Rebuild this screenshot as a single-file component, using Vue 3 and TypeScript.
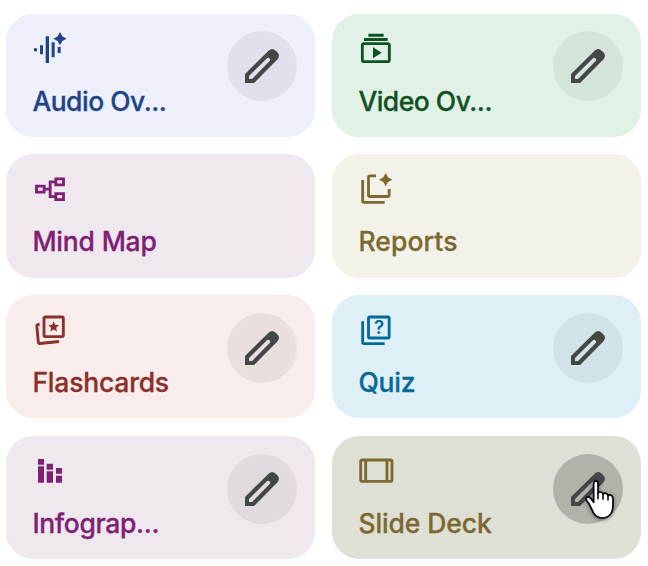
<template>
  <div class="studio-grid">
    <div
      v-for="tile in tiles"
      :key="tile.id"
      :class="['tile', tile.color, { hovered: tile.hovered }]"
    >
      <div class="tile-main">
        <svg class="tile-icon" viewBox="0 0 108 108" aria-hidden="true">
          <g v-if="tile.id === 'audio'" fill="currentColor">
            <path d="M6 55h9v9H6zM24 46h9v27h-9zM41 19h10v80H41zM59 37h9v45h-9zM77 51h9v18h-9z" />
            <path d="M84 6l7 13 13 7-13 7-7 13-7-13-13-7 13-7z" />
          </g>
          <g v-else-if="tile.id === 'video'">
            <rect class="line" x="13" y="41" width="81" height="54" rx="5" />
            <path fill="currentColor" d="M18 24h71v9H18zM31 11h46v9H31zM45 52l26 16-26 17z" />
          </g>
          <g v-else-if="tile.id === 'mindmap'" class="line">
            <path d="M13.5 45.5h23v18h-23zM71.5 23.5h23v18h-23zM71.5 68h23v18h-23z" />
            <path d="M37 54.5h17M71 32.5H54.5V77H71" />
          </g>
          <g v-else-if="tile.id === 'reports'">
            <path class="line" d="M14 27V90q0 4 4 4H80M54 14.5H36q-4.5 0-4.5 4.5V72q0 4.5 4.5 4.5H89q4.5 0 4.5-4.5V54" />
            <path fill="currentColor" d="M83 6l7 13 13 7-13 7-7 13-7-13-13-7 13-7z" />
          </g>
          <g v-else-if="tile.id === 'flashcards'">
            <rect class="line" x="36" y="15" width="58" height="59" rx="4" />
            <path class="line" d="M23 37l-5 .5q-4 1-3.5 5L19 90q.5 5 5 4.5L81 88.5" />
            <path fill="currentColor" d="M65 28l4.5 10.5 11.5 1-8.5 7.5 2.5 11.5-10-6-10 6L57.5 47 49 39.5l11.5-1z" />
          </g>
          <g v-else-if="tile.id === 'quiz'">
            <path class="line" d="M14 28V91q0 4 4 4H80" />
            <rect class="line" x="31.5" y="15" width="62" height="63" rx="4" />
            <text class="question" x="63" y="67" text-anchor="middle">?</text>
          </g>
          <g v-else-if="tile.id === 'infographic'" fill="currentColor">
            <path d="M18 21h18v17H18zM18 43h18v49H18zM44 35h19v18H44zM44 58h19v34H44zM72 48h18v17H72zM72 71h18v21H72z" />
          </g>
          <g v-else class="line">
            <rect x="8" y="24" width="94" height="64" rx="5" />
            <path d="M23 24v64M87 24v64" />
          </g>
        </svg>
        <span class="tile-label" :style="{ letterSpacing: tile.spacing + 'px' }">{{ tile.label }}</span>
      </div>
      <button v-if="tile.editable" class="edit-button" aria-label="Edit">
        <svg class="pencil" viewBox="0 0 101 101">
          <path
            fill="currentColor"
            fill-rule="evenodd"
            d="M0 101V74L70 5Q81-5 92 6L96 10Q106 20 96 31L27 101ZM12 89H21L74 35Q76 31 73 28T66 27L12 80Z"
          />
        </svg>
        <svg v-if="tile.hovered" class="pointer" viewBox="0 0 90 118">
          <path
            d="M26 67V10Q26 3 32.5 3T39 10V40Q42 34 49 37Q54 39 54 43Q58 37 65 41Q69 43 69 47Q74 42 80 47Q84 50 84 57V77Q84 91 78 101Q69 114 52 114Q34 114 25 98L15 77Q12 70 6 63Q1 56 6 52Q12 48 18 56Z"
          />
          <path class="fingers" d="M39 38V56M54 43V58M69 47V60" />
        </svg>
      </button>
    </div>
  </div>
</template>

<script setup lang="ts">
interface Tile {
  id: string;
  label: string;
  color: string;
  editable: boolean;
  spacing: number;
  hovered?: boolean;
}

const tiles: Tile[] = [
  { id: 'audio', label: 'Audio Ov...', color: 'blue', editable: true, spacing: -0.5 },
  { id: 'video', label: 'Video Ov...', color: 'green', editable: true, spacing: -0.5 },
  { id: 'mindmap', label: 'Mind Map', color: 'purple', editable: false, spacing: -0.2 },
  { id: 'reports', label: 'Reports', color: 'olive', editable: false, spacing: 0.1 },
  { id: 'flashcards', label: 'Flashcards', color: 'red', editable: true, spacing: -0.2 },
  { id: 'quiz', label: 'Quiz', color: 'cyan', editable: true, spacing: -0.2 },
  { id: 'infographic', label: 'Infograp...', color: 'purple', editable: true, spacing: -0.35 },
  { id: 'slides', label: 'Slide Deck', color: 'olive', editable: true, spacing: -0.1, hovered: true },
];
</script>

<style>
body {
  background: #ffffff;
}
</style>

<style scoped>
.studio-grid {
  display: grid;
  grid-template-columns: 309px 309px;
  grid-auto-rows: 123.3px;
  gap: 17.4px 17px;
  padding: 13.7px 7px 6px 6px;
}

.tile {
  display: flex;
  justify-content: space-between;
  box-sizing: border-box;
  padding: 17.8px 18px 0 26.4px;
  border-radius: 27px;
}

.tile-main {
  display: flex;
  flex-direction: column;
  margin-top: -1.3px;
}

.tile-icon {
  width: 36px;
  height: 36px;
  overflow: visible;
}

.line {
  fill: none;
  stroke: currentColor;
  stroke-width: 8.5;
}

.question {
  fill: currentColor;
  font: 600 56px Inter, sans-serif;
}

.tile-label {
  margin-top: 17.4px;
  font-family: Inter, 'Liberation Sans', sans-serif;
  font-size: 26.5px;
  font-weight: 500;
  line-height: 34px;
  white-space: nowrap;
  -webkit-text-stroke: 0.3px currentColor;
}

.edit-button {
  position: relative;
  display: flex;
  align-items: center;
  justify-content: center;
  flex: none;
  width: 70px;
  height: 70px;
  padding: 0;
  border: none;
  border-radius: 50%;
  background: rgba(68, 71, 70, 0.08);
  color: #444746;
  cursor: pointer;
}

.pencil {
  width: 34px;
  height: 34px;
}

/* 悬停状态的手形光标 */
.pointer {
  position: absolute;
  left: 32.3px;
  top: 26.5px;
  width: 30px;
  height: 39.3px;
  overflow: visible;
  fill: #ffffff;
  stroke: #000000;
  stroke-width: 5;
  stroke-linejoin: round;
  filter: drop-shadow(0 1.5px 2px rgba(0, 0, 0, 0.45));
}

.fingers {
  fill: none;
  stroke-width: 4.5;
  stroke-linecap: round;
}

.blue {
  background: #edeffb;
  color: #214488;
}

.green {
  background: #e1f1e6;
  color: #0f5223;
}

.purple {
  background: #efe8ee;
  color: #7f2074;
}

.olive {
  background: #f2f2e8;
  color: #7c6830;
}

.red {
  background: #f8edeb;
  color: #8c2e2a;
}

.cyan {
  background: #def0f6;
  color: #06699a;
}

.hovered {
  background: #dedfd5;
}

.hovered .edit-button {
  background: #b1b2aa;
}
</style>
